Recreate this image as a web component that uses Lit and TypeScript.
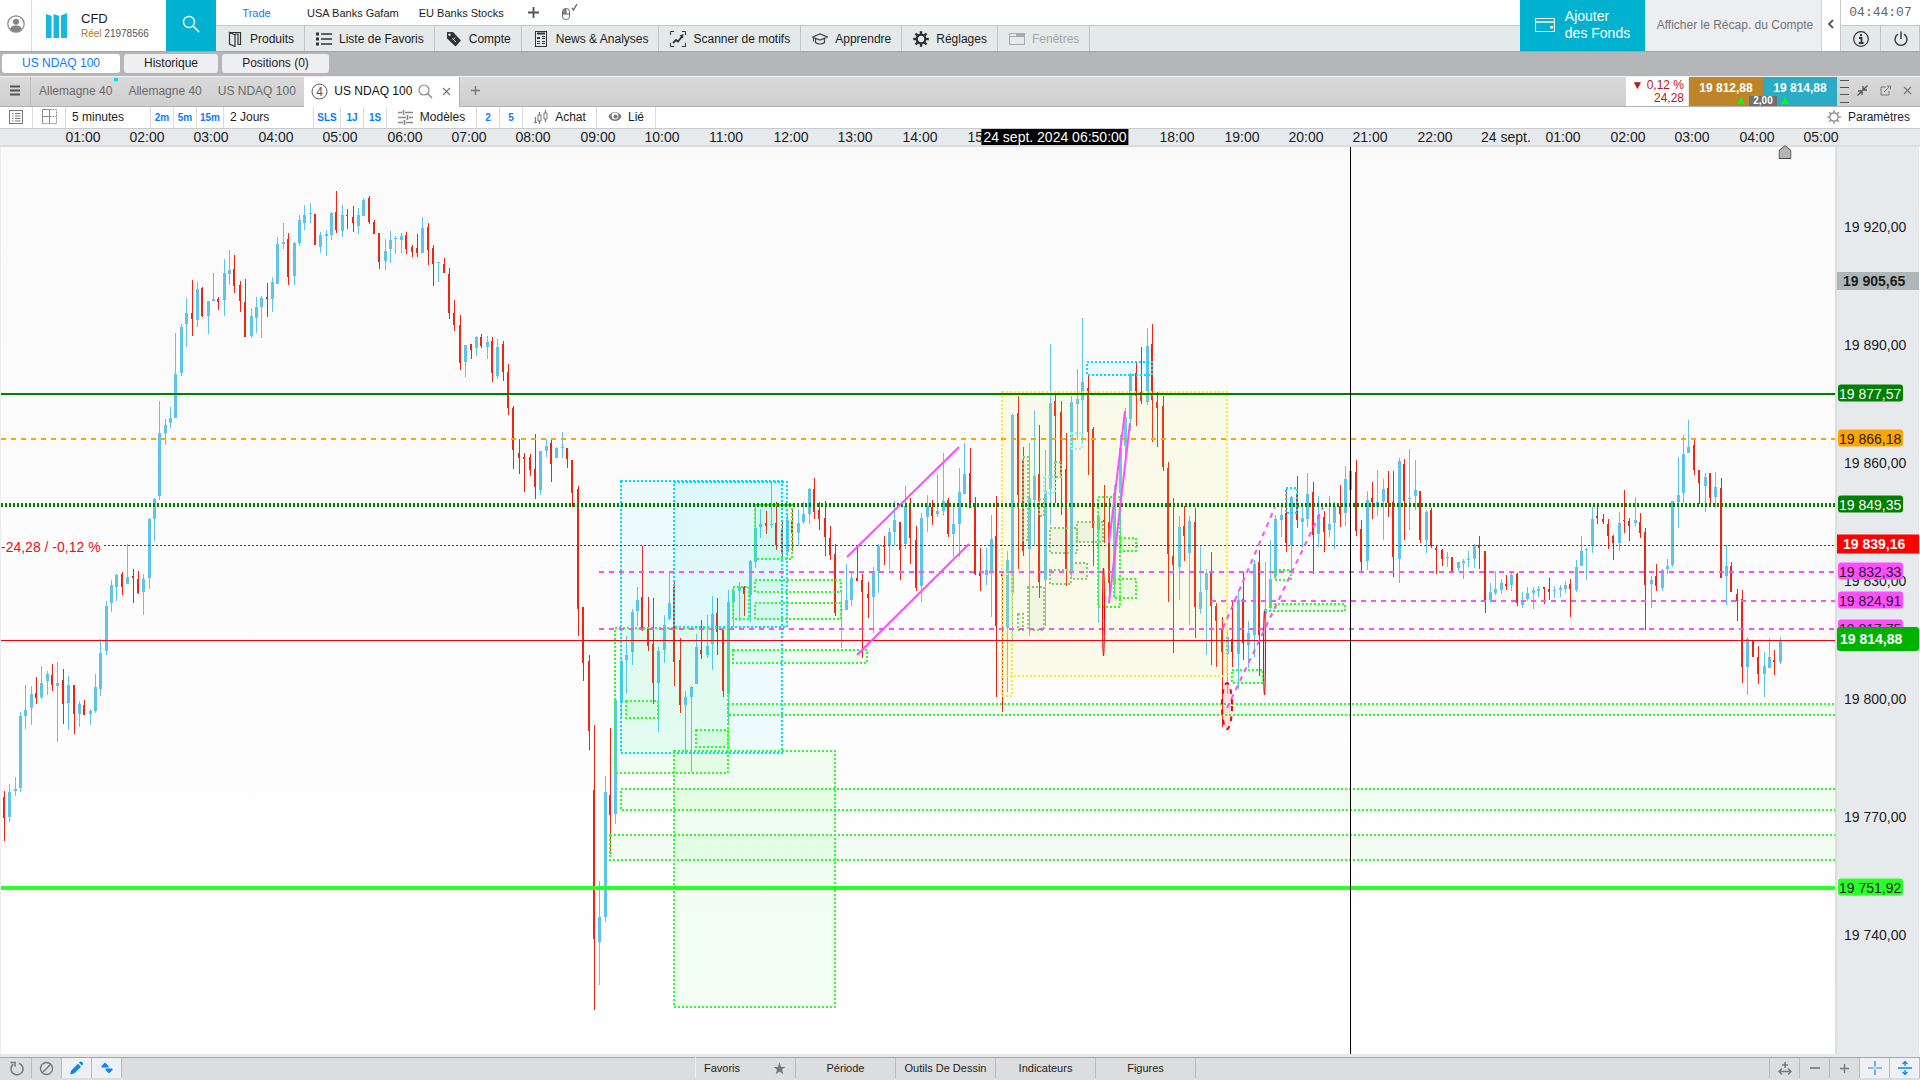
import { LitElement, html, svg, css } from "lit";
import { customElement } from "lit/decorators.js";

/* Five-minute candles: direction (u/d), then high, body top, body bottom and low in chart units. */
const CANDLES = `
d791 797 818 841|u784 792 817 822|u777 789 791 796|u712 716 788 792|u685 710 716 729|u686 694 708 725|d677 693 698 704|u666 683 697 699|u671 674 681 695|d664 675 685 691
u662 683 686 742|d669 680 704 724|u676 685 703 730|d685 685 714 734|u701 704 714 727|d700 705 715 715|u709 711 714 725|u674 687 711 713|u639 653 689 696|u601 606 651 655
u580 585 603 612|u574 575 587 601|d572 574 587 595|u544 577 584 584|d569 576 578 603|d571 579 593 594|u574 579 592 615|u518 519 578 589|u498 499 519 541|u401 433 496 500
u419 425 433 445|u407 418 423 428|u333 374 418 418|u324 327 373 376|u298 313 324 347|d280 313 319 336|u282 289 320 327|d287 288 316 317|u301 301 316 334|u273 299 301 301
d297 299 302 310|u259 273 300 316|u250 270 274 285|d255 269 286 293|d281 285 301 312|d279 302 337 337|u308 316 336 338|u297 307 318 333|u296 298 307 338|d283 297 299 317
u277 282 299 312|u237 244 284 284|u223 242 244 249|d233 239 277 285|u242 243 276 285|u215 220 243 246|u205 215 223 230|u203 213 214 223|d214 214 245 245|u232 235 247 253
u230 234 236 256|u212 213 235 240|d191 212 230 233|u205 215 231 237|d209 215 216 229|d206 217 223 232|u208 215 226 234|u198 200 216 216|d196 198 222 224|d220 222 234 234
d233 233 262 269|u239 251 261 270|u231 240 249 263|u236 238 239 254|u233 236 240 253|d232 235 249 254|d245 247 252 257|d234 248 253 257|u217 228 253 253|d223 227 250 265
d245 248 264 286|u262 262 263 282|d258 264 273 273|d268 274 313 319|d300 313 325 331|d315 325 363 370|u345 345 362 377|d344 344 350 359|u336 337 348 356|d334 337 346 348
u336 342 347 359|d337 341 373 382|u339 347 376 379|d341 344 372 381|d364 372 408 415|d406 408 450 469|d439 453 458 474|d453 457 459 492|d454 457 470 476|d434 469 487 499
u451 451 490 495|u439 446 451 457|d439 443 464 482|u447 448 458 458|u432 447 448 458|d448 448 459 468|d460 460 493 507|d486 489 609 636|d607 607 663 681|d655 661 731 750
d725 790 939 1010|u881 917 942 985|u776 792 917 922|d728 795 815 854|u698 700 814 824|u658 661 703 718|u636 655 660 694|u609 612 652 665|u587 600 611 626|d546 597 629 631
d597 627 646 651|d598 644 683 704|u647 651 683 732|u615 625 650 663|u572 603 619 620|d582 587 662 686|d638 660 705 713|u691 697 705 752|u686 687 697 772|u634 647 684 684
d620 650 654 659|u615 646 655 658|u596 614 644 670|d598 613 632 655|d628 629 691 697|u590 602 694 725|u587 591 602 627|u582 587 591 621|d586 587 594 616|u560 561 595 622
u504 528 562 568|u509 524 527 538|d511 523 526 534|u481 524 525 528|d502 523 545 550|d521 529 554 560|u515 520 552 556|d508 522 532 551|u509 523 533 546|u502 514 522 524
u488 489 514 524|d478 489 512 519|d502 510 519 530|d501 518 537 556|d526 538 555 560|d544 554 613 616|u591 609 610 648|u564 600 610 610|u573 578 600 606|d545 578 581 581
d574 580 592 658|d582 594 598 618|u567 571 597 633|u544 546 571 593|d536 545 547 565|u528 532 545 570|u501 520 532 545|d522 522 550 580|u486 506 544 549|d498 505 538 564
d526 540 588 591|u513 518 586 602|u495 506 517 532|d500 507 516 525|u474 511 514 517|u453 501 511 516|d498 500 534 537|u507 524 534 557|u468 492 524 557|u443 474 494 494
d448 473 508 508|d497 505 574 575|d548 573 576 591|u548 570 575 585|u515 539 572 617|d496 536 626 697|d574 574 576 712|u551 560 628 692|u414 415 593 640|d396 413 495 569
d447 460 551 556|u443 498 549 636|u410 476 500 546|d425 474 582 598|u450 491 580 626|u344 403 489 525|d395 401 416 503|d401 412 475 515|d433 469 569 586|u396 402 572 578
u369 399 404 440|u318 382 400 444|d375 388 432 475|d427 429 528 566|u514 517 530 623|d485 520 522 543|d498 522 583 603|u485 493 584 598|u435 448 493 545|u408 417 446 456
u373 374 419 431|d362 373 396 426|d347 392 401 404|u328 346 402 405|d324 344 400 442|d392 402 408 447|d396 406 467 471|d462 468 554 602|d498 556 565 653|u516 527 567 600
d506 526 536 561|u516 521 553 625|d508 522 607 638|u546 592 609 614|u569 573 590 655|d552 572 606 665|d603 606 621 667|d617 630 652 727|u630 637 654 694|d602 639 652 667
u591 600 654 689|d573 599 643 660|u621 633 645 668|u560 564 635 657|d550 562 635 676|u562 609 614 619|u540 579 608 611|u515 519 576 580|u507 515 520 537|d488 513 543 552
u496 497 545 570|d476 494 520 528|u508 518 522 548|u473 494 519 527|d482 492 535 574|u496 515 534 547|d511 517 532 552|u496 524 530 537|u502 506 523 549|d485 506 514 527
u466 479 513 526|u471 471 490 490|d460 472 531 536|d520 529 562 572|u491 500 561 570|d482 498 502 519|u470 502 507 516|u479 489 501 540|d471 488 503 517|d471 502 557 577
u458 461 559 583|d459 464 501 540|u449 498 499 530|u460 490 496 510|d491 491 540 543|u510 512 540 553|d508 510 546 548|d545 548 550 574|d549 550 559 566|u552 557 558 567
d557 557 571 571|u562 562 568 571|u559 561 563 579|u551 559 560 567|u544 545 559 568|d536 545 548 569|d551 551 600 613|u583 592 600 603|u571 589 593 595|u579 583 590 594
d575 584 586 590|u573 575 585 591|d573 574 603 606|u592 601 605 608|u587 593 599 601|u587 590 593 609|u586 589 591 597|d587 587 589 604|d578 589 592 600|u586 590 591 598
u585 588 590 597|u581 585 589 593|d579 584 589 617|u560 567 590 592|u536 551 566 566|u548 549 550 580|u507 519 546 553|d507 516 518 524|d514 519 522 524|d519 524 536 549
d535 536 543 560|u512 523 543 551|d490 520 521 533|d518 521 526 541|u497 520 523 526|d513 522 533 538|d528 532 585 630|u576 580 584 608|d564 576 586 591|u569 570 588 591
u559 566 569 574|u501 501 565 567|u457 495 502 528|u435 454 493 503|u420 447 453 453|d439 445 470 475|d470 470 483 504|u473 477 486 512|d473 473 498 503|u472 487 497 508
d478 488 578 578|u545 566 576 605|d562 566 592 592|d589 594 601 621|d590 599 667 683|u637 639 667 695|d640 640 657 657|d646 657 674 684|u652 666 674 697|u638 657 668 668
d650 660 662 675|u637 640 662 664`
  .trim()
  .split(/[|\n]/)
  .map((s) => ({ up: s[0] === "u", v: s.slice(1).split(" ").map(Number) }));

/* Drawn zones: style, left, top, right, bottom. */
type Zone = [string, number, number, number, number];
const ZONES: Zone[] = [
  ["gold", 1002, 392, 1227, 676],
  ["gold", 1002, 574, 1012, 696],
  ["cyan", 621, 481, 782, 753],
  ["cyan", 674, 482, 787, 627],
  ["lime", 615, 628, 728, 773],
  ["lime", 626, 701, 658, 718],
  ["lime", 696, 730, 728, 747],
  ["lime", 733, 587, 749, 619],
  ["lime", 755, 505, 792, 559],
  ["lime", 755, 580, 841, 592],
  ["lime", 755, 603, 841, 619],
  ["lime", 733, 650, 867, 663],
  ["lime", 728, 704, 1850, 715],
  ["lime", 674, 751, 835, 1007],
  ["lime", 621, 789, 1850, 810],
  ["lime", 610, 835, 1850, 860],
  ["cyan", 1087, 362, 1152, 375],
  ["aqua", 1071, 433, 1082, 449],
  ["aqua", 1044, 477, 1055, 493],
  ["olive", 1023, 457, 1028, 540],
  ["olive", 1055, 462, 1061, 477],
  ["olive", 1039, 499, 1044, 516],
  ["olive", 1050, 528, 1077, 553],
  ["olive", 1077, 522, 1103, 542],
  ["olive", 1050, 570, 1071, 584],
  ["olive", 1071, 563, 1087, 579],
  ["olive", 1028, 587, 1044, 630],
  ["olive", 1018, 614, 1023, 630],
  ["lime", 1098, 497, 1120, 607],
  ["lime", 1120, 538, 1136, 551],
  ["lime", 1114, 579, 1136, 598],
  ["cyan", 1286, 488, 1297, 513],
  ["lime", 1275, 570, 1291, 580],
  ["lime", 1270, 604, 1345, 611],
  ["lime", 1232, 670, 1263, 683],
];

type Trend = [string, number, number, number, number];
const TRENDS: Trend[] = [
  ["trend", 847, 557, 959, 447],
  ["trend", 857, 655, 969, 544],
  ["trend", 1109, 543, 1125, 411],
  ["trend", 1109, 603, 1130, 423],
  ["trend dashed", 1223, 628, 1275, 507],
  ["trend dashed", 1227, 708, 1323, 507],
];

type Level = [string, number, number];
const LEVELS: Level[] = [
  ["resist", 1, 394],
  ["orange", 1, 439],
  ["pivot", 1, 505],
  ["prev", 104, 545.5],
  ["pink", 599, 572],
  ["pink", 1211, 601],
  ["pink", 599, 629],
  ["last", 1, 640.5],
  ["support", 1, 888],
];

const TOP = 147;
const SPAN = 907;
const priceTop = (p: number) => ((463 - (p - 19860) * 3.935 - TOP) / SPAN) * 100;
const TICKS = [19920, 19890, 19860, 19830, 19800, 19770, 19740];
const TAGS: [number, string][] = [
  [19905.65, "grey"],
  [19877.57, "green"],
  [19866.18, "amber"],
  [19849.35, "green"],
  [19839.16, "red"],
  [19832.33, "pink"],
  [19824.91, "pink"],
  [19817.75, "pink"],
  [19814.88, "now"],
  [19751.92, "bright"],
];
const fmt = (p: number) => {
  const [a, b] = p.toFixed(2).split(".");
  return `${a.slice(0, 2)} ${a.slice(2)},${b}`;
};

const HOURS: [string, number][] = [
  ["01:00", 83], ["02:00", 147], ["03:00", 211], ["04:00", 276], ["05:00", 340], ["06:00", 405],
  ["07:00", 469], ["08:00", 533], ["09:00", 598], ["10:00", 662], ["11:00", 726], ["12:00", 791],
  ["13:00", 855], ["14:00", 920], ["15:00", 985], ["18:00", 1177], ["19:00", 1242], ["20:00", 1306],
  ["21:00", 1370], ["22:00", 1435], ["24 sept.", 1506], ["01:00", 1563], ["02:00", 1628],
  ["03:00", 1692], ["04:00", 1757], ["05:00", 1821],
];

const ic = (body: unknown, w = 16, h = 16) =>
  html`<svg class="ic" width=${w} height=${h} viewBox="0 0 ${w} ${h}" aria-hidden="true">${body}</svg>`;

const gearTeeth = (n: number, r1: number, r2: number) =>
  Array.from({ length: n }, (_, i) => {
    const a = (i * 2 * Math.PI) / n;
    return svg`<line x1=${8 + r1 * Math.cos(a)} y1=${8 + r1 * Math.sin(a)} x2=${8 + r2 * Math.cos(a)} y2=${8 + r2 * Math.sin(a)}/>`;
  });

const I = {
  user: ic(svg`<circle cx="9" cy="9" r="8.200" fill="none" stroke="#858585" stroke-width="1.200"/><circle cx="9" cy="6.800" r="3" fill="#858585"/><path d="M3.200 14c.6-3 3-3.600 5.800-3.600s5.200.6 5.800 3.600A8 8 0 0 1 9 17a8 8 0 0 1-5.800-3z" fill="#858585"/>`, 18, 18),
  logo: ic(svg`<path d="M0 1l6 2v22H0zM7.500 1l6 2v22h-6zM15 2.500L21 0v25h-6z" fill="#16b9dc"/><path d="M6 3v22M13.500 3v22" stroke="#fff" stroke-width=".8"/>`, 21, 25),
  search: ic(svg`<circle cx="7" cy="7" r="5.500" fill="none" stroke="#fff" stroke-width="1.400"/><path d="M11 11l6 6" stroke="#fff" stroke-width="1.600"/>`, 18, 18),
  mouse: ic(svg`<rect x="1.500" y="4.500" width="7" height="11" rx="3" fill="none" stroke="#666"/><path d="M2 5h3v5H2z" fill="#888"/><path d="M1.500 10h7M5 5v5" stroke="#666"/><path d="M11 4l1.500 2L16 0" fill="none" stroke="#666" stroke-width="1.300"/>`, 17, 17),
  book: ic(svg`<path d="M2.500 1.500h11v12h-3M2.500 1.500v11.500l5.500 2.500V4L2.500 1.500zM8 3h3v10" fill="none" stroke="#333" stroke-width="1.200"/>`),
  list: ic(svg`<path d="M0 3h3M0 8h3M0 13h3" stroke="#333" stroke-width="3"/><path d="M5 3h11M5 8h11M5 13h11" stroke="#333" stroke-width="1.300"/>`),
  tag: ic(svg`<path d="M1 1h6l8 8.500-5.500 6L1 7.500z" fill="#333"/><circle cx="3.500" cy="3.800" r="1.200" fill="#e4e9ea"/><path d="M6.500 7.500l3.500 3.500M9 6.500L6.800 9" stroke="#e4e9ea"/>`),
  news: ic(svg`<rect x="2.500" y=".5" width="11" height="15" fill="none" stroke="#333"/><path d="M4 2.500h8" stroke="#333" stroke-width="2"/><path d="M4 6h3v2H4z" fill="#333"/><path d="M9 5.500h3M9 7.500h3M4 10.500h3M9 10.500h3M4 12.500h3M9 12.500h3" stroke="#333"/>`),
  scan: ic(svg`<path d="M.5 4V.5H4M12 .5h3.500V4M.5 12v3.500H4M12 15.500h3.500V12" fill="none" stroke="#333"/><path d="M3 12l3-3 2 1.500 4-5" fill="none" stroke="#333" stroke-width="1.800"/><path d="M9.500 4.500L13.500 3l-.5 4.500z" fill="#333"/>`),
  cap: ic(svg`<path d="M.5 6L8 3l7.500 3L8 9zM3.500 7.500v4c2 2 7 2 9 0v-4" fill="none" stroke="#444" stroke-width="1.200"/><path d="M1.500 6.500v4" stroke="#444"/>`),
  gear: ic(svg`<circle cx="8" cy="8" r="4.300" fill="none" stroke="#2b2b2b" stroke-width="2.200"/><g stroke="#2b2b2b" stroke-width="2.400">${gearTeeth(8, 5, 7.8)}</g>`),
  windows: ic(svg`<rect x=".5" y="2.500" width="15" height="11" fill="none" stroke="#a8aaac"/><path d="M1 5.500h14" stroke="#a8aaac"/><path d="M7 3h8v2.500H7z" fill="#a8aaac"/>`),
  wallet: ic(svg`<rect x=".5" y=".5" width="19" height="13" rx="1" fill="none" stroke="#fff" stroke-width="1.200"/><path d="M0 4h20" stroke="#fff" stroke-width="1.400"/><path d="M15 8h3v2.500h-3z" fill="#fff"/>`, 20, 14),
  info: ic(svg`<circle cx="8" cy="8" r="7.300" fill="none" stroke="#333" stroke-width="1.200"/><path d="M8 3v2.200M6 7h2.500v4.500M5.800 12h4.800" stroke="#333" stroke-width="1.800" fill="none"/>`),
  power: ic(svg`<path d="M5 3.200a6 6 0 1 0 6 0" fill="none" stroke="#333" stroke-width="1.400"/><path d="M8 .5v7.500" stroke="#333" stroke-width="1.400"/>`),
  chevL: ic(svg`<path d="M6 1L2 5l4 4" fill="none" stroke="#555" stroke-width="1.800"/>`, 8, 10),
  menu: ic(svg`<path d="M0 1.500h10M0 5.500h10M0 9.500h10" stroke="#555" stroke-width="1.800"/>`, 10, 11),
  four: ic(svg`<circle cx="8.500" cy="8.500" r="7.500" fill="none" stroke="#555"/><text x="8.500" y="13" text-anchor="middle" font-size="12" fill="#555">4</text>`, 17, 17),
  lens: ic(svg`<circle cx="6" cy="6" r="5" fill="none" stroke="#888" stroke-width="1.200"/><path d="M9.500 9.500L14 14" stroke="#888" stroke-width="1.400"/>`, 15, 15),
  close: ic(svg`<path d="M1 1l7 7M8 1l-7 7" stroke="#777" stroke-width="1.200"/>`, 9, 9),
  plus: ic(svg`<path d="M5.500 1v9M1 5.500h9" stroke="#777" stroke-width="1.400"/>`, 11, 11),
  plusD: ic(svg`<path d="M6.500 1v11M1 6.500h11" stroke="#555" stroke-width="1.800"/>`, 13, 13),
  collapse: ic(svg`<path d="M1 6h4v4M5 6l-4.500 4.500M10 5H6V1M6 5l4.500-4.500" fill="none" stroke="#555" stroke-width="1.300"/>`, 11, 11),
  pop: ic(svg`<path d="M6 2H1v8h8V6" fill="none" stroke="#777"/><path d="M4 7l5-5M7 1h3.500v3.500" fill="none" stroke="#777"/>`, 11, 11),
  page: ic(svg`<rect x=".5" y=".5" width="13" height="13" fill="none" stroke="#777"/><path d="M3 3.500h1.500M3 6h1.500M3 8.500h1.500M3 11h1.500M6 3.500h5.500M6 6h5.500M6 8.500h5.500M6 11h5.500" stroke="#777"/>`, 14, 14),
  grid: ic(svg`<path d="M.5 .5h7v7h-7zM7.500 7.500v7M.5 7.500v7" fill="none" stroke="#888"/><path d="M7.500 .5h7v14h-14M7.500 7.500h7" fill="none" stroke="#888" stroke-dasharray="2 1"/>`, 15, 15),
  sliders: ic(svg`<path d="M0 3.500h4M7 3.500h8M0 8.500h8M11 8.500h4M0 13.500h5M8 13.500h7" stroke="#888" stroke-width="1.600"/><path d="M5.500 1v5M9.500 6v5M6.500 11v5" stroke="#888" stroke-width="1.600"/>`),
  bars: ic(svg`<path d="M2.500 8v5M1 13.500h3M6.500 3v3M6.500 12v3M12.500 1v3M12.500 10v3" stroke="#777" stroke-width="1.200"/><path d="M5 6h3v6H5zM11 4h3v6h-3z" fill="none" stroke="#777"/>`, 16, 16),
  eye: ic(svg`<path d="M.5 5.500C3-.5 11-.5 13.500 5.500 11 11.500 3 11.500 .5 5.500z" fill="#777"/><circle cx="7" cy="5" r="3.400" fill="#fff"/><circle cx="7.500" cy="5.500" r="2" fill="#777"/>`, 14, 11),
  gearThin: ic(svg`<circle cx="8" cy="8" r="4.200" fill="none" stroke="#888" stroke-width="1.200"/><g stroke="#888" stroke-width="1.400">${gearTeeth(8, 4.6, 6.8)}</g>`),
  refresh: ic(svg`<path d="M4.200 3.200A6 6 0 1 0 10 2.200" fill="none" stroke="#777" stroke-width="1.500"/><path d="M1.500 1.500H6v4.200" fill="none" stroke="#777" stroke-width="1.500"/>`, 15, 15),
  ban: ic(svg`<circle cx="7.500" cy="7.500" r="6" fill="none" stroke="#777" stroke-width="1.400"/><path d="M3.500 11.500l8-8" stroke="#777" stroke-width="1.400"/>`, 15, 15),
  pencil: ic(svg`<path d="M1 13.500l1.200-4L9 2.700l3 3-7 6.800zM10 1.800L11 .8c.6-.6 1.400-.5 2 .1l.8.800c.5.500.5 1.300 0 1.900l-1 1z" fill="#0a84ff"/>`, 15, 15),
  updown: ic(svg`<path d="M4 1.500L7.500 5v1.500H.5V5zM8 12.500L4.500 9V7.500h7V9z" fill="#0a84ff"/>`, 12, 14),
  star: ic(svg`<path d="M6.500 .5l1.600 4.400h4.400L9 7.600l1.300 4.700-3.800-2.800-3.800 2.800L4 7.600.5 4.900h4.400z" fill="#777"/>`, 13, 13),
  fitX: ic(svg`<path d="M7 1v6M4 4h6" stroke="#777" stroke-width="1.500"/><path d="M1 10.500h12M4 7.500l-3 3 3 3M10 7.500l3 3-3 3" fill="none" stroke="#777" stroke-width="1.400"/>`, 14, 14),
  minus: ic(svg`<path d="M0 5h10" stroke="#777" stroke-width="1.600"/>`, 10, 10),
  cross: ic(svg`<path d="M7 0v5.500M7 8.500V14M0 7h5.500M8.500 7H14M6.500 7h1" stroke="#0a84ff" stroke-width="1.200"/>`, 14, 14),
  fitY: ic(svg`<path d="M0 7h14M7 0v5M7 9v5M4.500 3L7 .5 9.500 3M4.500 11L7 13.500 9.500 11" fill="none" stroke="#0a84ff" stroke-width="1.300"/>`, 14, 14),
};

@customElement("price-chart")
class PriceChart extends LitElement {
  static styles = css`
    :host { display: grid; grid-template: 18px minmax(0, 1fr) / minmax(0, 1fr) 85px; flex: 1; min-height: 0; font: 14px/16px "Liberation Sans", Arial, sans-serif; color: #1c1c1c; }
    .times { grid-column: 1 / 3; position: relative; background: #e6eaed; border-bottom: 2px solid #dcdddf; }
    .hour, .stamp { position: absolute; top: 0; transform: translateX(-50%); white-space: nowrap; }
    .stamp { background: #000; color: #fff; padding: 0 2px; }
    .home { position: absolute; top: 16px; transform: translateX(-50%); z-index: 2; display: block; }
    .plot { position: relative; min-width: 0; min-height: 0; border-left: 1px solid #ececee; background: linear-gradient(#fafafa, #fff); }
    .plot svg { display: block; position: absolute; inset: 0; width: 100%; height: 100%; }
    .change { position: absolute; left: 0; transform: translateY(-50%); color: #f00c14; white-space: nowrap; }
    .axis { position: relative; overflow: hidden; background: #e6eaed; border-left: 2px solid #dcdddf; border-right: 1px solid #fff; }
    .tick, .tag { position: absolute; transform: translateY(-50%); white-space: nowrap; }
    .tick { left: 7px; }
    .tag { left: 1px; padding: 1px 2px 0 1px; margin-top: -1px; border-radius: 3px; }
    .green { background: #008000; color: #fff; }
    .amber { background: #ffa500; }
    .pink { background: #ff4dff; }
    .bright { background: #2aff2a; }
    .grey, .red, .now { font-weight: bold; left: 0; right: 0; }
    .grey { background: #aeb6b8; border-radius: 0; padding: 1px 6px; margin-top: -2px; }
    .red { background: #f00; color: #fff; border-radius: 0; padding: 1px 6px 2px; }
    .now { background: #00b200; color: #fff; padding: 4px 3px; margin-top: -2px; }

    .crisp { shape-rendering: crispEdges; }
    .up { fill: #5fc4ec; }
    .down { fill: #f02410; }
    .zone { stroke-width: 2; stroke-dasharray: 2 2; }
    .gold { stroke: #ffe92e; fill: rgba(240, 235, 80, 0.1); }
    .cyan { stroke: #00dcff; fill: rgba(0, 220, 255, 0.06); }
    .lime { stroke: #2aff2a; fill: rgba(42, 255, 42, 0.06); }
    .aqua { stroke: #9ff2ec; fill: rgba(159, 242, 236, 0.16); }
    .olive { stroke: #8dc878; fill: rgba(120, 180, 100, 0.08); }
    .trend { stroke: #ff4dff; stroke-width: 2; }
    .dashed { stroke-dasharray: 5 5; }
    .resist { stroke: #008000; stroke-width: 2; }
    .orange { stroke: #ffa500; stroke-width: 2; stroke-dasharray: 5 5; }
    .pivot { stroke: #008000; stroke-width: 4; stroke-dasharray: 2 2; }
    .prev { stroke: #d80000; stroke-width: 1; stroke-dasharray: 2 2; }
    line.pink { stroke: #ff4dff; stroke-width: 2; stroke-dasharray: 5 5; }
    .last { stroke: #f00010; stroke-width: 1; }
    .support { stroke: #2aff2a; stroke-width: 4; }
    .cursor { stroke: #000; stroke-width: 1; }
    .mark { fill: rgba(255, 0, 0, 0.1); stroke: #f40000; stroke-width: 2; }
    .thin { stroke-width: 1; }
  `;

  render() {
    return html`
      <div class="times">
        ${HOURS.map(([t, x]) => html`<span class="hour" style="left:${(x / 1920) * 100}%">${t}</span>`)}
        <span class="stamp" style="left:${(1055 / 1920) * 100}%">24 sept. 2024 06:50:00</span>
        <svg class="home" style="left:${(1785 / 1920) * 100}%" width="13" height="14" viewBox="0 0 13 14">
          <path d="M.5 13.500V5.500L6.500 .7l6 4.800v8z" fill="#b4b4b4" stroke="#4a4a4a" />
        </svg>
      </div>
      <div class="plot">
        <svg viewBox="1 ${TOP} 1834 ${SPAN}" preserveAspectRatio="none" role="img" aria-label="US NDAQ 100">
          <g class="crisp">
            ${CANDLES.map(({ up, v: [h, t, b, l] }, i) => {
              const x = Math.floor(4.3 + i * 5.365);
              return svg`<g class=${up ? "up" : "down"}>
                <rect x=${x} y=${h} width="1" height=${l - h}></rect>
                <rect x=${x - 1} y=${t} width=${up ? 3 : 2} height=${b - t}></rect></g>`;
            })}
          </g>
          <g class="crisp">
            ${ZONES.map(([k, a, b, c, d]) => svg`<rect class="zone ${k}" x=${a} y=${b} width=${c - a} height=${d - b}></rect>`)}
            ${LEVELS.map(([k, x, y]) => svg`<line class=${k} x1=${x} x2="1836" y1=${y} y2=${y}></line>`)}
          </g>
          <ellipse class="mark thin" cx="1103.500" cy="612" rx="1" ry="44"></ellipse>
          <ellipse class="mark thin" cx="1264.500" cy="653" rx="1" ry="42"></ellipse>
          <ellipse class="mark dashed" cx="1227" cy="706" rx="5" ry="23"></ellipse>
          ${TRENDS.map(([k, a, b, c, d]) => svg`<line class=${k} x1=${a} y1=${b} x2=${c} y2=${d}></line>`)}
          <line class="cursor crisp" x1="1350.500" x2="1350.500" y1=${TOP} y2=${TOP + SPAN}></line>
        </svg>
        <span class="change" style="top:${priceTop(19838.6)}%">-24,28 / -0,12 %</span>
      </div>
      <div class="axis">
        ${TICKS.map((p) => html`<span class="tick" style="top:${priceTop(p)}%">${fmt(p)}</span>`)}
        ${TAGS.map(([p, k]) => html`<span class="tag ${k}" style="top:${priceTop(p)}%">${fmt(p)}</span>`)}
      </div>`;
  }
}

@customElement("app-root")
class AppRoot extends LitElement {
  static styles = css`
    :host { display: flex; flex-direction: column; height: 100vh; overflow: hidden; background: #fff; font: 12px/16px "Liberation Sans", Arial, sans-serif; color: #1c1c1c; }
    * { box-sizing: border-box; }
    button { font: inherit; color: inherit; background: none; border: 0; padding: 0; margin: 0; display: flex; align-items: center; justify-content: center; white-space: nowrap; }
    .ic { display: block; flex: none; }
    .grow { flex: 1; }

    .header { display: flex; height: 52px; flex: none; border-bottom: 1px solid #9aa6ba; }
    .user { width: 32px; border-right: 1px solid #dcdcdc; padding-bottom: 4px; }
    .account { display: flex; align-items: center; width: 134px; padding-left: 14px; gap: 14px; }
    .cfd { font-size: 13px; line-height: 17px; }
    .num { font-size: 10px; line-height: 14px; color: #555; white-space: nowrap; }
    .num b { font-weight: normal; color: #b8780a; }
    .find { width: 50px; background: #00b2cf; }
    .find .ic { margin-bottom: 4px; }
    .navs { flex: 1; min-width: 0; display: flex; flex-direction: column; }
    .views { display: flex; height: 25px; flex: none; font-size: 11px; }
    .views button { padding: 0 10px; }
    .views .on { width: 81px; }
    .views .iconic { padding: 0 0 0 13px; }
    .views .iconic + .iconic { padding-left: 21px; }
    .on { color: #0a7cff; }
    .menu { display: flex; flex: 1; background: #e4e9ea; border-top: 1px solid #c4c8ca; }
    .menu button { gap: 7px; padding: 0 10px 0 11px; border-right: 1px solid #c0c4c6; }
    .menu .off { color: #a4a6a8; }
    .funds { width: 125px; background: #00b2cf; color: #fff; font-size: 14px; line-height: 17px; gap: 10px; text-align: left; padding-bottom: 2px; }
    .recap { width: 177px; background: #edeef0; color: #707478; border-right: 1px solid #d4d4d4; padding: 0 0 2px 4px; }
    .chev { width: 19px; border-right: 1px solid #c8c8c8; padding-bottom: 4px; }
    .clock { width: 79px; display: grid; grid-template: 26px 1fr / 1fr 1fr; }
    .clock time { grid-column: 1 / 3; font: 13px/26px "Liberation Mono", monospace; color: #666; text-align: center; border-bottom: 1px solid #c4c8ca; }
    .clock button { background: #e4e9ea; border-right: 1px solid #c0c4c6; padding-left: 2px; }

    .strip { display: flex; gap: 4px; height: 24px; flex: none; padding: 2px; background: #b5b6b8; }
    .strip button { background: #efeff1; border-radius: 3px; width: 94px; height: 19px; padding-bottom: 2px; }
    .strip .on { background: #fff; width: 118px; }
    .strip .wide { width: 107px; }

    .tabs { display: flex; height: 31px; flex: none; background: linear-gradient(#dadada, #cecece); border-top: 1px solid #f0f0f0; border-bottom: 1px solid #b2b2b2; color: #6a6a6a; }
    .tabs > button { padding-bottom: 2px; }
    .burger { width: 31px; border-right: 1px solid #bcbcbc; }
    .tab { position: relative; padding: 0 8px; }
    .tabs .note::after { content: ""; position: absolute; right: 2px; top: 1px; width: 4px; height: 3px; background: #00dcff; }
    .current { width: 156px; background: #fff; color: #111; gap: 6px; margin-bottom: -1px; border-right: 1px solid #b4b4b4; }
    .current .ic:last-child { margin-left: 3px; }
    .add { width: 31px; }
    .move { width: 63px; padding: 2px 4px 0 0; background: #fff; color: #c01414; text-align: right; line-height: 13px; border-right: 1px solid #e8e8e8; }
    .quote { position: relative; display: flex; }
    .quote button { width: 74px; color: #fff; font-weight: bold; padding-bottom: 8px; }
    .sell { background: #c08428; }
    .buy { background: #2aacc4; }
    .spread { position: absolute; left: 60px; bottom: 0; width: 28px; height: 10px; background: #6e7072; color: #fff; font: bold 10px/10px "Liberation Sans", Arial, sans-serif; text-align: center; }
    .spread::before, .spread::after { content: ""; position: absolute; bottom: 2px; border: 4px solid transparent; border-top: 0; border-bottom: 7px solid #0f0; }
    .spread::before { right: 32px; }
    .spread::after { left: 32px; }
    .wins { display: flex; align-items: center; gap: 12px; width: 83px; padding-left: 3px; }
    .wins button { padding-bottom: 2px; }
    .rungs { width: 9px; height: 23px; border-top: 1px solid #555; border-bottom: 1px solid #555; background: linear-gradient(#555, #555) 0 6px / 100% 1px no-repeat, linear-gradient(#555, #555) 0 13px / 100% 1px no-repeat; margin-right: -4px; }

    .tools { display: flex; height: 22px; flex: none; border-bottom: 1px solid #c8cacc; background: #fff; }
    .tools button { border-right: 1px solid #dcdcdc; flex: none; width: 23px; gap: 6px; padding-bottom: 2px; }
    .tools .mini { font: bold 10px/16px "Liberation Sans", Arial, sans-serif; color: #0a7cff; padding: 0; }
    .tools .left { justify-content: flex-start; padding-left: 6px; }
    .tools .w33 { width: 33px; }
    .tools .w85 { width: 85px; }
    .tools .w27 { width: 27px; }
    .tools .w90 { width: 90px; }
    .tools .w74 { width: 74px; }
    .tools .w59 { width: 59px; }
    .tools .params { width: auto; border: 0; padding-right: 10px; }

    .bottom { display: flex; justify-content: space-between; height: 26px; flex: none; padding-bottom: 2px; border-top: 3px solid #e6eaed; background: #dcddde; box-shadow: inset 0 1px #a4a6a8; font-size: 11px; }
    .group { display: flex; padding: 1px 0 0 2px; }
    .group button { width: 30px; border-right: 1px solid #b8babc; }
    .group.mid button { width: 100px; }
    .group.mid { border-left: 1px solid #eef0f0; padding-left: 0; }
    .group .lit { background: #eef0f3; }
    .group .fav { justify-content: space-between; padding: 0 9px 0 8px; }
    .group.end { border-left: 1px solid #b8babc; padding-left: 0; }
  `;

  render() {
    return html`
      <header class="header">
        <button class="user" aria-label="Profil">${I.user}</button>
        <div class="account">${I.logo}
          <div><div class="cfd">CFD</div><div class="num"><b>Réel</b> 21978566</div></div>
        </div>
        <button class="find" aria-label="Rechercher">${I.search}</button>
        <div class="navs">
          <nav class="views">
            <button class="on">Trade</button><button>USA Banks Gafam</button><button>EU Banks Stocks</button>
            <button class="iconic" aria-label="Ajouter">${I.plusD}</button>
            <button class="iconic" aria-label="Souris">${I.mouse}</button>
          </nav>
          <nav class="menu">
            <button>${I.book}Produits</button><button>${I.list}Liste de Favoris</button>
            <button>${I.tag}Compte</button><button>${I.news}News &amp; Analyses</button>
            <button>${I.scan}Scanner de motifs</button><button>${I.cap}Apprendre</button>
            <button>${I.gear}Réglages</button><button class="off" disabled>${I.windows}Fenêtres</button>
          </nav>
        </div>
        <button class="funds">${I.wallet}<span>Ajouter<br />des Fonds</span></button>
        <button class="recap">Afficher le Récap. du Compte</button>
        <button class="chev" aria-label="Replier">${I.chevL}</button>
        <div class="clock"><time>04:44:07</time>
          <button aria-label="Informations">${I.info}</button><button aria-label="Quitter">${I.power}</button>
        </div>
      </header>

      <nav class="strip">
        <button class="on">US NDAQ 100</button><button>Historique</button><button class="wide">Positions (0)</button>
      </nav>

      <div class="tabs">
        <button class="burger" aria-label="Menu">${I.menu}</button>
        <button class="tab note">Allemagne 40</button><button class="tab">Allemagne 40</button><button class="tab">US NDAQ 100</button>
        <button class="current">${I.four}US NDAQ 100${I.lens}${I.close}</button>
        <button class="add" aria-label="Nouvel onglet">${I.plus}</button>
        <span class="grow"></span>
        <div class="move">▼ 0,12 %<br />24,28</div>
        <div class="quote"><button class="sell">19 812,88</button><button class="buy">19 814,88</button><span class="spread">2,00</span></div>
        <div class="wins"><span class="rungs"></span>
          <button aria-label="Réduire">${I.collapse}</button><button aria-label="Détacher">${I.pop}</button><button aria-label="Fermer">${I.close}</button>
        </div>
      </div>

      <div class="tools">
        <button class="w33" aria-label="Liste">${I.page}</button><button class="w33" aria-label="Grille">${I.grid}</button>
        <button class="w85 left">5 minutes</button>
        <button class="mini">2m</button><button class="mini">5m</button><button class="mini w27">15m</button>
        <button class="w90 left">2 Jours</button>
        <button class="mini w27">SLS</button><button class="mini">1J</button><button class="mini">1S</button>
        <button class="w90">${I.sliders}Modèles</button>
        <button class="mini">2</button><button class="mini">5</button>
        <button class="w74">${I.bars}Achat</button><button class="w59">${I.eye}Lié</button>
        <span class="grow"></span>
        <button class="params">${I.gearThin}Paramètres</button>
      </div>

      <price-chart></price-chart>

      <footer class="bottom">
        <div class="group">
          <button aria-label="Actualiser">${I.refresh}</button><button aria-label="Effacer">${I.ban}</button>
          <button class="lit" aria-label="Dessiner">${I.pencil}</button><button class="lit" aria-label="Échelle">${I.updown}</button>
        </div>
        <div class="group mid">
          <button class="fav">Favoris${I.star}</button><button>Période</button><button>Outils De Dessin</button><button>Indicateurs</button><button>Figures</button>
        </div>
        <div class="group end">
          <button aria-label="Ajuster la largeur">${I.fitX}</button><button aria-label="Zoom arrière">${I.minus}</button>
          <button aria-label="Zoom avant">${I.plus}</button><button class="lit" aria-label="Réticule">${I.cross}</button>
          <button class="lit" aria-label="Ajuster la hauteur">${I.fitY}</button>
        </div>
      </footer>`;
  }
}
